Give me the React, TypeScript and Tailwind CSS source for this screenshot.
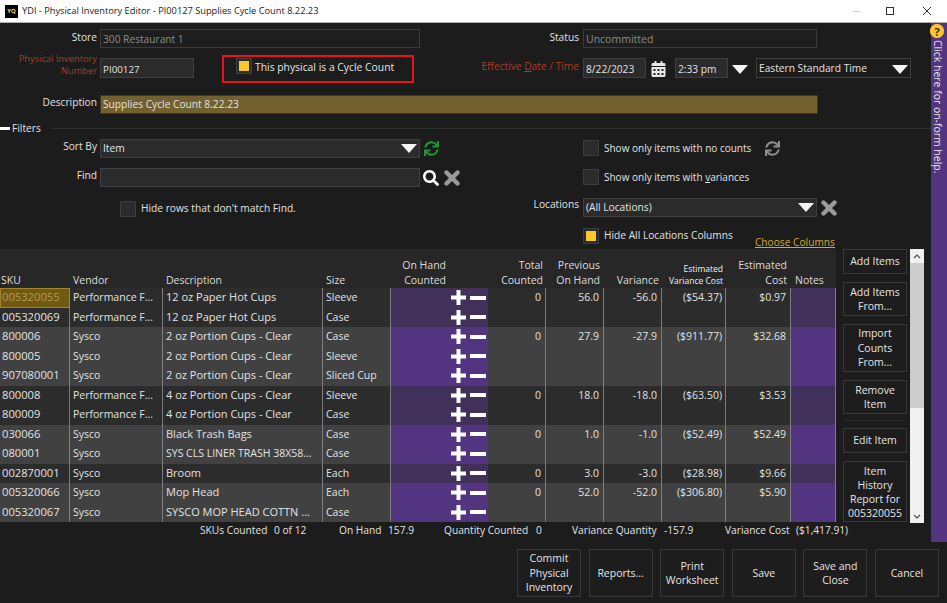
import React from "react";
import { FaSync, FaSearch, FaCalendarAlt, FaQuestionCircle } from "react-icons/fa";

const Caret = ({ className = "" }: { className?: string }) => (
  <svg width="16" height="9" viewBox="0 0 16 9" className={className}>
    <path d="M0 0H16L8 9Z" fill="#f4f4f4" />
  </svg>
);

const BoldX = ({ className = "" }: { className?: string }) => (
  <svg width="16" height="16" viewBox="0 0 16 16" className={className}>
    <path d="M2.5 2.5L13.5 13.5M13.5 2.5L2.5 13.5" stroke="#9a9a9a" strokeWidth="4.4" strokeLinecap="round" />
  </svg>
);

const Check = ({ on = false }: { on?: boolean }) => (
  <span className="flex h-[16px] w-[16px] shrink-0 items-center justify-center border border-[#3d3d3d] bg-[#2c2c2c]">
    {on && <span className="h-[10px] w-[10px] bg-[#fcc62d]" />}
  </span>
);

const Field = ({
  w,
  h = "h-[19px]",
  text = "",
  dim = false,
  caret = false,
  className = "",
}: {
  w: string;
  h?: string;
  text?: string;
  dim?: boolean;
  caret?: boolean;
  className?: string;
}) => (
  <div
    className={`flex shrink-0 items-center justify-between border pl-[2px] pr-[2px] ${w} ${h} ${
      dim ? "border-[#3a3a3a] bg-[#1e1e1e] text-[#8c8c8c]" : "border-[#3f3f3f] bg-[#2b2b2b] text-[#e2e2e2]"
    } ${className}`}
  >
    <span>{text}</span>
    {caret && <Caret />}
  </div>
);

type Row = { sku: string; vendor: string; desc: string; size: string; nums?: string[]; light: boolean; tight?: boolean };

const rows: Row[] = [
  { sku: "005320055", vendor: "Performance F...", desc: "12 oz Paper Hot Cups", size: "Sleeve", nums: ["0", "56.0", "-56.0", "($54.37)", "$0.97"], light: false },
  { sku: "005320069", vendor: "Performance F...", desc: "12 oz Paper Hot Cups", size: "Case", light: false },
  { sku: "800006", vendor: "Sysco", desc: "2 oz Portion Cups - Clear", size: "Case", nums: ["0", "27.9", "-27.9", "($911.77)", "$32.68"], light: true },
  { sku: "800005", vendor: "Sysco", desc: "2 oz Portion Cups - Clear", size: "Sleeve", light: true },
  { sku: "907080001", vendor: "Sysco", desc: "2 oz Portion Cups - Clear", size: "Sliced Cup", light: true },
  { sku: "800008", vendor: "Performance F...", desc: "4 oz Portion Cups - Clear", size: "Sleeve", nums: ["0", "18.0", "-18.0", "($63.50)", "$3.53"], light: false },
  { sku: "800009", vendor: "Performance F...", desc: "4 oz Portion Cups - Clear", size: "Case", light: false },
  { sku: "030066", vendor: "Sysco", desc: "Black Trash Bags", size: "Case", nums: ["0", "1.0", "-1.0", "($52.49)", "$52.49"], light: true },
  { sku: "080001", vendor: "Sysco", desc: "SYS CLS LINER TRASH 38X58...", size: "Case", light: true, tight: true },
  { sku: "002870001", vendor: "Sysco", desc: "Broom", size: "Each", nums: ["0", "3.0", "-3.0", "($28.98)", "$9.66"], light: false },
  { sku: "005320066", vendor: "Sysco", desc: "Mop Head", size: "Each", nums: ["0", "52.0", "-52.0", "($306.80)", "$5.90"], light: true },
  { sku: "005320067", vendor: "Sysco", desc: "SYSCO MOP HEAD COTTN ...", size: "Case", light: true },
];

const cols = "grid grid-cols-[70px_93px_160px_68px_97px_58px_58px_58px_64px_65px_45px]";
const sep = "border-r border-[#7d7d7d]";

const Btn = ({ children, className = "" }: { children: React.ReactNode; className?: string }) => (
  <div
    className={`flex w-[64px] shrink-0 items-center justify-center border border-[#383838] bg-[#1d1d1d] text-center text-[10.5px] leading-[14.5px] text-[#e4e4e4] ${className}`}
  >
    <span>{children}</span>
  </div>
);

export default function App() {
  return (
    <div className="h-[603px] w-[947px] overflow-hidden bg-[#1c1c1c] font-['Open_Sans',sans-serif] text-[10.2px] text-[#e2e2e2]">
      {/* Title bar */}
      <div className="flex h-[23px] items-center border-b border-[#b0b0b0] bg-white pl-[5px] text-[9.25px] text-[#222]">
        <span className="flex h-[13px] w-[13px] items-center justify-center bg-black text-[6px] font-bold text-[#f2d48a]">YQ</span>
        <span className="ml-[4px]">YDI - Physical Inventory Editor - PI00127 Supplies Cycle Count 8.22.23</span>
        <div className="ml-auto flex items-center">
          <svg width="10" height="10" viewBox="0 0 10 10" className="mr-[23px]">
            <path d="M1 5.5H9" stroke="#d0d0d0" />
          </svg>
          <svg width="10" height="10" viewBox="0 0 10 10" className="mr-[27px]">
            <rect x="1.5" y="1.5" width="7" height="7" fill="none" stroke="#333" />
          </svg>
          <svg width="10" height="10" viewBox="0 0 10 10" className="mr-[15px]">
            <path d="M1 1L9 9M9 1L1 9" stroke="#333" />
          </svg>
        </div>
      </div>

      <div className="flex h-[519px]">
        <div className="w-[931px] shrink-0">
          {/* Row 1 */}
          <div className="mt-[6px] flex h-[19px] items-start">
            <span className="w-[97px] text-right leading-[17px]">Store</span>
            <Field w="w-[320px]" text="300 Restaurant 1" dim className="ml-[3px] pt-[2px]" />
            <span className="w-[159px] text-right leading-[17px]">Status</span>
            <Field w="w-[234px]" text="Uncommitted" dim className="ml-[4px] pt-[2px] text-[10.5px]" />
          </div>
          {/* Row 2 */}
          <div className="mt-[10px] flex h-[20px] items-start">
            <span className="-mt-[5px] w-[97px] text-right text-[9.3px] leading-[12px] text-[#a93c25]">
              Physical Inventory
              <br />
              Number
            </span>
            <Field w="w-[94px]" h="h-[20px]" text="PI00127" className="ml-[3px] pt-[4px] text-[9.8px]" />
            <div className="-mt-[3px] ml-[28px] flex h-[28px] w-[192px] shrink-0 items-start gap-[3px] border-2 border-[#e8141c] pl-[12px] pt-[1px]">
              <Check on />
              <span className="pt-[2px] text-[10.35px] text-[#e6e6e6]">This physical is a Cycle Count</span>
            </div>
            <span className="w-[165px] text-right leading-[17px] text-[#a93c25]">
              Effective <span className="underline">D</span>ate / Time
            </span>
            <Field w="w-[63px]" h="h-[20px]" text="8/22/2023" className="ml-[4px] pt-[4px]" />
            <FaCalendarAlt className="ml-[5px] mt-[3px] h-[16px] w-[15px] text-[#e8e8e8]" />
            <Field w="w-[53px]" h="h-[20px]" text="2:33 pm" className="ml-[9px] pt-[4px]" />
            <Caret className="ml-[4px] mt-[7px]" />
            <Field w="w-[155px]" h="h-[20px]" text="Eastern Standard Time" caret className="ml-[8px] pt-[2px] !bg-[#1c1c1c]" />
          </div>
          {/* Description */}
          <div className="mt-[17px] flex h-[19px] items-start">
            <span className="w-[97px] text-right leading-[15px]">Description</span>
            <Field w="w-[718px]" text="Supplies Cycle Count 8.22.23" className="ml-[3px] !border-[#3f3820] !bg-[#73602f]" />
          </div>
          {/* Filters divider */}
          <div className="mt-[7px] flex h-[15px] items-center">
            <span className="h-[3px] w-[10px] bg-white" />
            <span className="ml-[2px]">Filters</span>
            <span className="ml-[10px] h-px flex-1 bg-[#2e2e2e]" />
          </div>
          {/* Filters */}
          <div className="mt-[3px] flex h-[110px]">
            <div className="w-[470px] shrink-0">
              <div className="flex h-[19px] items-start">
                <span className="w-[97px] text-right leading-[15px]">Sort By</span>
                <Field w="w-[320px]" text="Item" caret className="ml-[3px]" />
                <FaSync className="ml-[4px] mt-[2px] h-[15px] w-[15px] text-[#219437]" />
              </div>
              <div className="mt-[10px] flex h-[19px] items-start">
                <span className="w-[97px] text-right leading-[15px]">Find</span>
                <Field w="w-[320px]" className="ml-[3px]" />
                <FaSearch className="ml-[3px] mt-[2px] h-[16px] w-[16px] text-white" />
                <BoldX className="ml-[5px] mt-[2px]" />
              </div>
              <div className="ml-[120px] mt-[14px] flex items-center gap-[5px]">
                <Check />
                <span>Hide rows that don't match Find.</span>
              </div>
            </div>
            <div className="w-[380px] shrink-0">
              <div className="ml-[113px] mt-[1px] flex h-[16px] items-center gap-[5px]">
                <Check />
                <span className="text-[10px]">Show only items with no counts</span>
                <FaSync className="ml-[9px] h-[15px] w-[15px] text-[#8e8e8e]" />
              </div>
              <div className="ml-[113px] mt-[13px] flex h-[16px] items-center gap-[5px]">
                <Check />
                <span className="text-[10px]">
                  Show only items with <span className="underline">v</span>ariances
                </span>
              </div>
              <div className="mt-[13px] flex h-[19px] items-start">
                <span className="w-[109px] text-right leading-[13px]">Locations</span>
                <Field w="w-[234px]" text="(All Locations)" caret className="ml-[4px]" />
                <BoldX className="ml-[4px] mt-[2px]" />
              </div>
              <div className="ml-[113px] mt-[11px] flex h-[16px] items-center gap-[5px]">
                <Check on />
                <span>Hide All Locations Columns</span>
                <span className="ml-[17px] mt-[13px] text-[#d8a92c] underline">Choose Columns</span>
              </div>
            </div>
          </div>

          {/* Table + side */}
          <div className="flex h-[274px]">
            <div className="w-[836px] shrink-0 text-[10.5px]">
              <div className={`${cols} h-[39px] items-end bg-[#272727] pb-[1px] leading-[14.5px] text-[#dcdcdc]`}>
                <span className="pl-[1px]">SKU</span>
                <span className="pl-[3px]">Vendor</span>
                <span className="pl-[3px]">Description</span>
                <span className="pl-[3px]">Size</span>
                <span className="pr-[42px] text-right">
                  On Hand
                  <br />
                  Counted
                </span>
                <span className="pr-[3px] text-right">
                  Total
                  <br />
                  Counted
                </span>
                <span className="pr-[4px] text-right">
                  Previous
                  <br />
                  On Hand
                </span>
                <span className="pr-[3px] text-right">Variance</span>
                <span className="pr-[3px] text-right text-[8.5px] leading-[12px] text-[#efefef]">
                  Estimated
                  <br />
                  Variance Cost
                </span>
                <span className="pr-[4px] text-right">
                  Estimated
                  <br />
                  Cost
                </span>
                <span className="pl-[4px]">Notes</span>
              </div>
              {rows.map((r, i) => {
                const n = r.nums ?? ["", "", "", "", ""];
                const bg = r.light ? "bg-[#414141]" : "bg-[#2c2c2c]";
                const purple = r.light ? "bg-[#533480]" : "bg-[#41305a]";
                return (
                  <div key={r.sku} className={`${cols} h-[19.5px] items-stretch leading-[18px] ${bg}`}>
                    {i === 0 ? (
                      <span className="border border-[#a4842a] bg-[#71590f] pl-[1px] text-[11.2px] leading-[16px] text-[#b09a55]">{r.sku}</span>
                    ) : (
                      <span className={`${sep} pl-[2px] text-[11.2px]`}>{r.sku}</span>
                    )}
                    <span className={`${sep} truncate pl-[3px]`}>{r.vendor}</span>
                    <span className={`${sep} overflow-hidden whitespace-nowrap pl-[3px] ${r.tight ? "text-[10.5px]" : "text-[11px]"}`}>{r.desc}</span>
                    <span className={`${sep} pl-[3px]`}>{r.size}</span>
                    <span className={`${purple} flex items-center justify-end gap-[4px] pr-[2px]`}>
                      <svg width="15" height="15" viewBox="0 0 15 15">
                        <path d="M5.5 0H9.5V5.5H15V9.5H9.5V15H5.5V9.5H0V5.5H5.5Z" fill="#fff" />
                      </svg>
                      <span className="h-[4px] w-[16px] bg-white" />
                    </span>
                    <span className={`${sep} pr-[4px] text-right`}>{n[0]}</span>
                    <span className={`${sep} pr-[4px] text-right`}>{n[1]}</span>
                    <span className={`${sep} pr-[4px] text-right`}>{n[2]}</span>
                    <span className={`${sep} pr-[3px] text-right`}>{n[3]}</span>
                    <span className={`${sep} pr-[4px] text-right`}>{n[4]}</span>
                    <span className={`${purple} ${sep}`} />
                  </div>
                );
              })}
            </div>
            <div className="ml-[7px] flex w-[64px] shrink-0 flex-col">
              <Btn className="h-[25px]">Add Items</Btn>
              <Btn className="mt-[8px] h-[34px]">
                Add Items
                <br />
                From...
              </Btn>
              <Btn className="mt-[8px] h-[48px]">
                Import
                <br />
                Counts
                <br />
                From...
              </Btn>
              <Btn className="mt-[8px] h-[34px]">
                Remove
                <br />
                Item
              </Btn>
              <span className="mt-[6px] h-px w-[62px] bg-[#2c2c2c]" />
              <Btn className="mt-[7px] h-[25px]">Edit Item</Btn>
              <Btn className="mt-[8px] h-[61px] !leading-[14px]">
                Item
                <br />
                History
                <br />
                Report for
                <br />
                005320055
              </Btn>
            </div>
            <div className="ml-[3px] flex w-[14px] shrink-0 flex-col bg-[#f0f0f0]">
              <div className="flex h-[14px] items-center justify-center">
                <svg width="8" height="5" viewBox="0 0 8 5">
                  <path d="M1 4L4 1L7 4" fill="none" stroke="#505050" strokeWidth="1.2" />
                </svg>
              </div>
              <div className="h-[145px] bg-[#cdcdcd]" />
              <div className="mt-auto flex h-[14px] items-center justify-center">
                <svg width="8" height="5" viewBox="0 0 8 5">
                  <path d="M1 1L4 4L7 1" fill="none" stroke="#505050" strokeWidth="1.2" />
                </svg>
              </div>
            </div>
          </div>

          {/* Totals */}
          <div className="ml-[200px] grid h-[14px] grid-cols-[74px_65px_49px_56px_92px_36px_92px_61px_71px_auto] items-center whitespace-nowrap">
            <span>SKUs Counted</span>
            <span>0 of 12</span>
            <span>On Hand</span>
            <span>157.9</span>
            <span>Quantity Counted</span>
            <span>0</span>
            <span>Variance Quantity</span>
            <span>-157.9</span>
            <span>Variance Cost</span>
            <span>($1,417.91)</span>
          </div>
        </div>

        {/* Help bar */}
        <div className="relative w-[16px] shrink-0 bg-[#533480]">
          <span className="absolute -left-[1px] top-[1px] flex h-[14px] w-[14px] items-center justify-center rounded-full bg-[#fcc62d]">
            <FaQuestionCircle className="h-[14px] w-[14px] text-[#fcc62d]" />
            <span className="absolute text-[11px] font-bold leading-none text-[#3a2a10]">?</span>
          </span>
          <span className="absolute left-[0px] top-[17px] whitespace-nowrap text-[10.45px] leading-[14px] text-[#e8e8e8] [writing-mode:vertical-rl]">
            Click here for on-form help.
          </span>
        </div>
      </div>

      {/* Bottom buttons */}
      <div className="ml-[517px] mt-[7px] flex gap-[7.6px]">
        <Btn className="h-[48px]">
          Commit
          <br />
          Physical
          <br />
          Inventory
        </Btn>
        <Btn className="h-[48px]">Reports...</Btn>
        <Btn className="h-[48px]">
          Print
          <br />
          Worksheet
        </Btn>
        <Btn className="h-[48px]">Save</Btn>
        <Btn className="h-[48px]">
          Save and
          <br />
          Close
        </Btn>
        <Btn className="h-[48px]">Cancel</Btn>
      </div>
    </div>
  );
}
